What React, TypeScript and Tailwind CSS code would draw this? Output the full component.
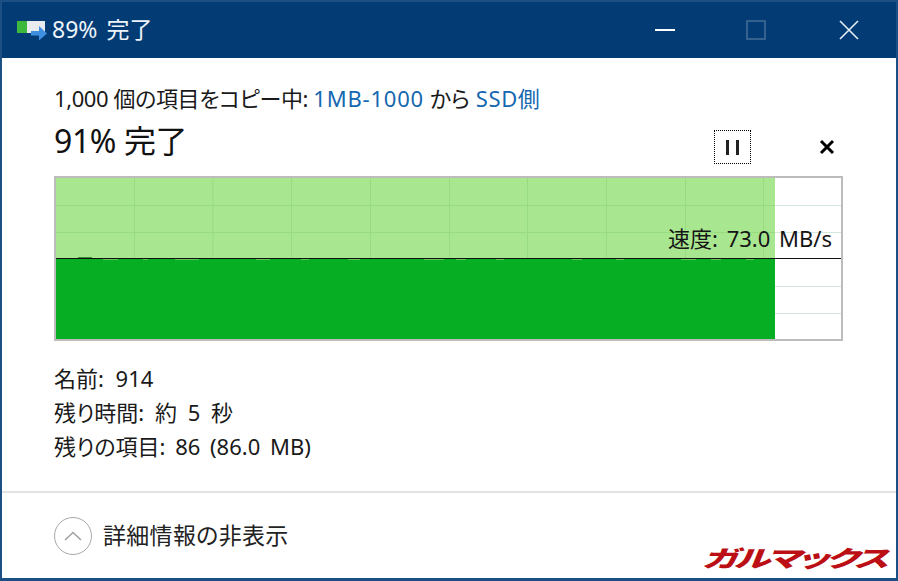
import React from 'react';

const FONT = 'font-["Noto_Sans","Noto_Sans_CJK_JP",sans-serif] [font-feature-settings:"palt"]';

// Vertical grid lines every 78.5px, horizontal ones every ~27px (chart-local coords)
const V_LINES = [78, 156.5, 235, 314, 393, 471, 550, 629, 707];
const H_LINES = [27, 54, 108, 135];

// Small notches along the top of the speed area: [x, width]
const NOTCHES: [number, number][] = [
  [47, 15], [87, 5], [119, 24], [200, 14], [245, 8], [292, 12], [368, 20], [400, 10], [440, 8],
  [516, 10], [560, 8], [625, 15], [655, 10], [690, 8],
];

const SpeedChart: React.FC = () => (
  <div className="relative h-[165px] w-[789px] border-2 border-[#bcbcbc] bg-white">
    <svg width="785" height="161" className="block">
      <rect x="0" y="0" width="719" height="80" fill="#a9e690" />
      <rect x="0" y="81" width="719" height="80" fill="#06ae24" />
      {NOTCHES.map(([x, w]) => (
        <rect key={x} x={x} y="81" width={w} height="1" fill="#5cc85a" />
      ))}
      <rect x="22" y="79" width="14" height="1" fill="#3b8f3a" />
      {V_LINES.map((x) => (
        <line key={x} x1={x + 0.5} x2={x + 0.5} y1="0" y2="80" stroke="#97dd80" />
      ))}
      {H_LINES.map((y) => (
        <g key={y}>
          {y < 80 ? (
            <line x1="0" x2="719" y1={y + 0.5} y2={y + 0.5} stroke="#97dd80" />
          ) : null}
          <line x1="719" x2="785" y1={y + 0.5} y2={y + 0.5} stroke="#d5e8dc" />
        </g>
      ))}
      <line x1="0" x2="785" y1="80.5" y2="80.5" stroke="#111" />
    </svg>
    <div className="absolute right-[9px] top-[46px] text-[22px] leading-[28px] text-[#151515] [word-spacing:3px]">速度: 73.0 MB/s</div>
  </div>
);

const App: React.FC = () => (
  <div className={`${FONT} flex h-[581px] w-[898px] flex-col overflow-hidden border-x-2 border-b-[3px] border-[#1c4f83] bg-white text-[#1a1a1a]`}>
    <header className="flex h-[58px] shrink-0 items-center border-t-2 border-[#1c4f83] bg-[#033c75] pl-[15px] text-white">
      <svg width="30" height="22" viewBox="0 0 30 22" className="mt-[1px]">
        <rect x="0" y="1" width="28" height="12" fill="#e8ecee" />
        <rect x="0" y="1" width="10" height="12" fill="#3cb83c" />
        <path d="M14 13h8V8l8 7.5-8 7v-5h-8z" fill="#3f8fe0" transform="translate(0 -2)" />
      </svg>
      <span className="mb-[2px] ml-[5px] text-[23px] leading-none text-[#eef4fa] [word-spacing:3px]">89% 完了</span>
      <div className="ml-auto flex items-center pr-[37px]">
        <div className="mr-[71px] h-[2px] w-[20px] bg-white" />
        <div className="mr-[73px] h-[20px] w-[20px] border-2 border-[#35618f]" />
        <svg width="20" height="20" viewBox="0 0 20 20">
          <path d="M1 1l18 18M19 1L1 19" stroke="#e6eef6" strokeWidth="1.6" fill="none" />
        </svg>
      </div>
    </header>

    <main className="flex flex-1 flex-col pl-[52px] pt-[24px]">
      <div className="text-[22px] leading-[32px]">
        <span className="tracking-[-0.4px]">1,000 個の項目をコピー中: </span>
        <span className="tracking-[0.8px] text-[#1467b0]">1MB-1000</span> から{' '}
        <span className="tracking-[0.6px] text-[#1467b0]">SSD側</span>
      </div>
      <div className="mt-[4px] flex h-[58px] w-[789px]">
        <div className="mt-[1px] text-[32px] leading-[44px] tracking-[-0.4px] text-[#111]">91% 完了</div>
        <button className="ml-auto mt-[12px] flex h-[34px] w-[37px] items-center justify-center gap-[7px] border border-dotted border-black">
          <span className="h-[15px] w-[3px] bg-[#222]" />
          <span className="h-[15px] w-[3px] bg-[#222]" />
        </button>
        <svg width="16" height="16" viewBox="0 0 16 16" className="ml-[68px] mr-[8px] mt-[21px]">
          <path d="M2 2l12 12M14 2L2 14" stroke="#000" strokeWidth="3" fill="none" />
        </svg>
      </div>
      <SpeedChart />
      <div className="mt-[20px] text-[22px] leading-[34px]">
        <div className="[word-spacing:6px]">名前: 914</div>
        <div className="[word-spacing:5px]">残り時間: 約 5 秒</div>
        <div className="[word-spacing:4px]">残りの項目: 86 (86.0 MB)</div>
      </div>
    </main>

    <footer className="relative flex h-[87px] shrink-0 items-center border-t-2 border-[#e2e2e2] pl-[52px]">
      <div className="flex h-[38px] w-[38px] items-center justify-center rounded-full border border-[#a8a8a8]">
        <svg width="18" height="10" viewBox="0 0 18 10">
          <path d="M1 9l8-7.5L17 9" stroke="#a0a0a0" strokeWidth="1.5" fill="none" />
        </svg>
      </div>
      <span className="ml-[11px] text-[23px] leading-none tracking-[0.3px] text-[#222]">詳細情報の非表示</span>
      <span className="absolute bottom-[5px] right-[11px] origin-right scale-x-[1.6] text-[23px] font-black italic leading-[30px] tracking-[-2px] text-[#bb0f15]">ガルマックス</span>
    </footer>
  </div>
);

export default App;
